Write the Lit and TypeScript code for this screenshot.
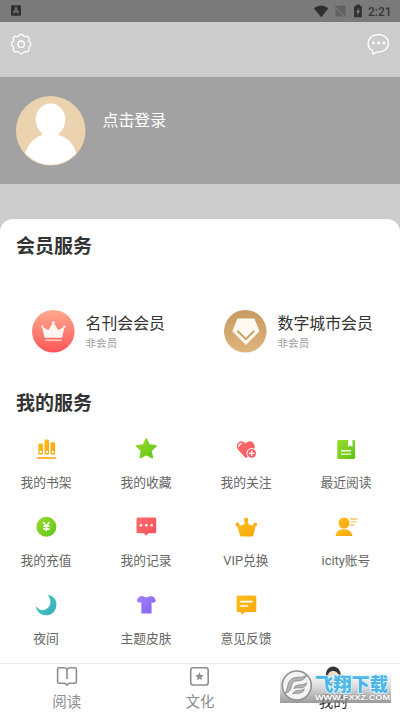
import { LitElement, html, css, svg } from "lit";
import { customElement } from "lit/decorators.js";

const defs = svg`<defs>
  <linearGradient id="o" x1="0" y1="0" x2="1" y2="1"><stop offset="0" stop-color="#fcc023"/><stop offset="1" stop-color="#fba506"/></linearGradient>
  <linearGradient id="g" x1="0" y1="0" x2="1" y2="1"><stop offset="0" stop-color="#98dc2c"/><stop offset="1" stop-color="#5fc417"/></linearGradient>
  <linearGradient id="r" x1="0" y1="0" x2="1" y2="1"><stop offset="0" stop-color="#ff7070"/><stop offset="1" stop-color="#f54f55"/></linearGradient>
  <linearGradient id="t" x1="0" y1="0" x2="1" y2="1"><stop offset="0" stop-color="#4cc8c4"/><stop offset="1" stop-color="#36b0b8"/></linearGradient>
  <linearGradient id="p" x1="0" y1="0" x2="1" y2="1"><stop offset="0" stop-color="#a283fb"/><stop offset="1" stop-color="#8462f2"/></linearGradient>
</defs>`;

const services = [
  { label: "我的书架", icon: svg`<path fill="url(#o)" fill-rule="evenodd" d="M3.2 5.4h3a.8.8 0 0 1 .8.8V16.500H2.300V6.200a.8.8 0 0 1 .9-.8zM4.700 12.700a1.200 1.200 0 1 0 0 2.400 1.200 1.200 0 0 0 0-2.400zM9.300 1.500h2.900a.8.8 0 0 1 .8.8V16.500H8.500V2.300a.8.8 0 0 1 .8-.8zM10.800 12.700a1.200 1.200 0 1 0 0 2.400 1.200 1.200 0 0 0 0-2.400zM15.300 4.200h3a.8.8 0 0 1 .8.8V16.500h-4.600V5a.8.8 0 0 1 .8-.8zM16.800 12.700a1.200 1.200 0 1 0 0 2.400 1.200 1.200 0 0 0 0-2.400z"/><rect x=".7" y="19" width="19.300" height="1.900" rx=".9" fill="#fcb53c"/>` },
  { label: "我的收藏", icon: svg`<path fill="url(#g)" stroke="url(#g)" stroke-width="1.600" stroke-linejoin="round" d="M10.300 .8l2.900 6.300 6.700.8-4.900 4.900 1.200 6.800-5.900-3.100-6 3.100 1.100-6.800L.7 7.900l6.800-.8z"/>` },
  { label: "我的关注", icon: svg`<path fill="url(#r)" d="M9.700 5.300C7.300 2.600 4 2.600 2.100 4.700.1 7 .4 9.900 2.300 12l7 7.400q.8.700 1.600 0L17 12.800c2-2.200 2.300-5 .3-7.700-2-2.500-5.400-2.400-7.600.2z"/><path d="M2.900 8.400c0-1.700 1-2.600 2.500-2.700" stroke="#fff" stroke-width="1.200" stroke-linecap="round" fill="none"/><circle cx="15.700" cy="15.300" r="5.300" fill="#fff"/><circle cx="15.700" cy="15.300" r="4.400" fill="#f5656a"/><path d="M15.700 12.600V18M13 15.300h5.400" stroke="#fff" stroke-width="1.200"/>` },
  { label: "最近阅读", icon: svg`<path fill="url(#g)" d="M3 2h9.100v6.900l2.200-1.500 2.200 1.500V2h1.100c1.100 0 1.500.6 1.500 1.500v16c0 1-.5 1.500-1.500 1.500H3c-1.100 0-1.700-.6-1.700-1.600V3.600C1.300 2.600 1.900 2 3 2z"/><path d="M5.100 12.800h10M5.100 16.100h10" stroke="#f4ffe4" stroke-width="1.400"/>` },
  { label: "我的充值", icon: svg`<circle cx="10.400" cy="10.700" r="10" fill="url(#g)"/><path d="M7.300 6l3.100 4.100L13.500 6M10.400 10v5.300M7.100 10.300h6.600M7.100 13h6.600" stroke="#fff" stroke-width="1.500" fill="none"/>` },
  { label: "我的记录", icon: svg`<path fill="url(#r)" d="M2.200 1.500h16.300c1.100 0 1.700.7 1.700 1.700v12.300c0 1.100-.6 1.700-1.700 1.700h-6.300l-2.100 2.500L8 17.200H2.200c-1.100 0-1.700-.6-1.700-1.700V3.200c0-1 .6-1.700 1.700-1.700z"/><g fill="#fff"><circle cx="4.900" cy="9.300" r="1.300"/><circle cx="10.300" cy="9.300" r="1.300"/><circle cx="15.700" cy="9.300" r="1.300"/></g>` },
  { label: "VIP兑换", icon: svg`<path fill="url(#o)" d="M1 8.800q4.500 1.700 7.400-.7l.6-3.500h2.600l.7 3.500q3.400 2.400 7.400.7l-2.200 10.200c-.2 1-.6 1.400-1.500 1.400H5.300c-1 0-1.400-.5-1.500-1.400z"/><g fill="#fbb018"><circle cx="10.200" cy="4" r="2.200"/><circle cx="1.500" cy="8.500" r="2"/><circle cx="19.200" cy="8.500" r="2"/></g>` },
  { label: "icity账号", icon: svg`<circle cx="8" cy="7" r="5.500" fill="url(#o)"/><path fill="url(#o)" d="M-.4 20.100c.3-4.300 3.100-6.800 8.200-6.800s8 2.500 8.600 6.800z"/><path d="M14.200 3h7M14.800 5.900h5.400M14.200 9h4.300" stroke="#fcc35c" stroke-width="1.400"/>` },
  { label: "夜间", icon: svg`<path fill="url(#t)" d="M11.500.8c5.900.7 9.300 5 8.900 10.600-.5 5.900-4.900 9.900-10.500 9.900-5.400 0-9.600-3.900-10.200-9.500 2.200 3.800 5.800 5.200 9.600 3.800 5.700-2.100 7.100-9.500 2.200-14.800z"/>` },
  { label: "主题皮肤", icon: svg`<path fill="url(#p)" d="M6.800 2q3.500 2.400 7.200 0l3 .4c1.200.7 2.200 2.200 2.900 4.500-.9 1.200-2 1.800-3.400 1.900l-.9-.6v10.200c0 .8-.4 1.200-1.200 1.200H6.500c-.8 0-1.200-.4-1.200-1.200V8.200l-.9.600C3 8.700 1.700 8 .8 6.800 1.500 4.500 2.500 3 3.700 2.400z"/>` },
  { label: "意见反馈", icon: svg`<path fill="url(#o)" d="M2.400 1.600h16c1.200 0 1.900.7 1.900 1.900v12.700c0 1.200-.7 1.900-1.900 1.900h-9L6.200 20.200c-.7.500-1.100.3-1.100-.5v-1.600H2.400c-1.200 0-1.900-.7-1.900-1.900V3.500c0-1.200.7-1.900 1.900-1.900z"/><path d="M5 7.700h11M5 12h6.500" stroke="#fff" stroke-width="1.700" stroke-linecap="round"/>` },
];

@customElement("app-root")
export class AppRoot extends LitElement {
  static styles = css`
    :host { display: flex; flex-direction: column; width: 400px; height: 712px; overflow: hidden; position: relative;
      background: #ccc; font-family: Roboto, "Noto Sans CJK SC", sans-serif; color: #333; }
    * { box-sizing: border-box; }
    svg { display: block; flex: none; overflow: visible; }
    .status { flex: none; height: 21.500px; background: #7a7a7a; display: flex; align-items: center; padding: 0 8px 0 11px; color: #2f2f2f; }
    .status .sp { flex: 1; }
    .time { font-size: 13px; font-weight: 500; }
    .bar { flex: none; height: 55.500px; display: flex; justify-content: space-between; padding: 11px 10px 0 10px; }
    .user { flex: none; height: 107px; background: #a2a2a2; display: flex; padding: 19px 16px 0; }
    .login { margin: 13px 0 0 16.500px; font-size: 15.900px; line-height: 24px; color: #fff; }
    .sheet { margin-top: 35px; flex: 1 1 0; min-height: 0; background: #fff; border-radius: 13px 13px 0 0; }
    h2 { margin: 0; padding-left: 16px; font-size: 19px; line-height: 28px; font-weight: 700; }
    .sheet h2:first-child { padding-top: 14px; }
    .members { display: flex; margin-top: 49px; padding-left: 32px; height: 43px; }
    .member { flex: none; width: 192px; display: flex; }
    .mt { margin-left: 10.500px; }
    .name { font-size: 15.900px; line-height: 24px; margin-top: 2px; white-space: nowrap; }
    .sub { font-size: 10.600px; line-height: 16px; color: #999; }
    .second { margin-top: 37px; }
    .grid { display: grid; grid-template-columns: repeat(4, 100px); grid-auto-rows: 78px; margin: 20px 0 0 -4px; }
    .cell { display: flex; flex-direction: column; align-items: center; color: #666; font-size: 12.800px; line-height: 20px; gap: 13px; }
    .tabs { height: 49px; background: #fff; border-top: 1px solid #ebebeb; display: flex; flex: none; }
    .tab { flex: 1; display: flex; flex-direction: column; align-items: center; font-size: 14.500px; line-height: 20px; color: #8d8d8d; padding-top: 2px; gap: 6px; }
    .tab.on { color: #333; }
    .mark { position: absolute; left: 280px; top: 669px; width: 111px; height: 34px; background: linear-gradient(rgba(150,150,150,0) 5%, rgba(145,145,145,.3) 50%, rgba(130,130,130,.8)); }
  `;

  render() {
    return html`
      <div class="status">
        <svg width="10" height="11" viewBox="0 0 10 11"><rect y=".3" width="10" height="10.400" rx="1" fill="#2f2f2f"/><path d="M2.500 8.500L5 2.500l2.500 6M3.500 6.700h3" stroke="#7a7a7a" stroke-width="1.200" fill="none"/></svg>
        <span class="sp"></span>
        <svg width="79" height="14" viewBox="0 0 79 14">
          <path d="M.8 4.200Q8 -1.200 15.500 4.200L8.200 13.200z" fill="#2f2f2f"/>
          <path d="M25 1.500h7.500v11H22.500V4z" fill="#616161"/><path d="M21.500 2l11.500 11" stroke="#7a7a7a" stroke-width="1.800"/><path d="M22 1.300l11 11.300" stroke="#555" stroke-width="1"/>
          <path d="M43.200.5h3.600v1.400h2v11.300h-7.700V1.900h2.100z" fill="#2f2f2f"/><path d="M46 3.600l-2.800 4.300h1.500L44 11.700l3-4.600h-1.600z" fill="#858585"/>
          <text class="time" x="55" y="11.700" textLength="23.500" lengthAdjust="spacingAndGlyphs" fill="#363636">2:21</text>
        </svg>
      </div>
      <div class="bar">
        <svg width="22" height="22" viewBox="0 0 22 22" fill="none" stroke="#fff" stroke-width="1.300" stroke-linejoin="round"><path d="M8.700 2.900C9.500 1 12.900 1 13.700 2.900c.5.900 1.400.8 2.400.4 1.800-.3 3.300 1.200 2.900 3-.4 1-.5 1.900.4 2.300 1.900.9 1.900 4.100 0 5-.9.500-.8 1.400-.4 2.400.3 1.700-1.200 3.200-2.900 2.900-1-.4-1.900-.5-2.400.4-.8 1.900-4.200 1.900-5 0-.5-.9-1.400-.8-2.400-.4-1.800.3-3.200-1.200-2.900-2.900.4-1 .5-1.900-.4-2.400-1.900-.9-1.900-4.100 0-5 .9-.4.800-1.300.4-2.300-.4-1.800 1.100-3.300 2.900-3 1 .4 1.900.5 2.400-.4z"/><circle cx="11.200" cy="11.200" r="3.200"/></svg>
        <svg width="24" height="24" viewBox="0 0 24 24"><path d="M6.500 17.800C3.600 16 2.200 13.400 2.200 10.200c0-5 4.500-8.700 10.100-8.700 5.700 0 10.200 3.800 10.200 8.700 0 5.100-4.500 8.900-10.200 8.900h-1.500L6.700 21z" stroke="#fff" stroke-width="1.400" fill="none" stroke-linejoin="round"/><g fill="#fff"><circle cx="7.400" cy="10" r="1.400"/><circle cx="12.700" cy="10" r="1.400"/><circle cx="18" cy="10" r="1.400"/></g></svg>
      </div>
      <div class="user">
        <svg width="70" height="70" viewBox="0 0 70 70"><clipPath id="c"><circle cx="34.700" cy="34.800" r="34"/></clipPath><circle cx="34.700" cy="34.800" r="34.800" fill="#ecd3b0"/><g clip-path="url(#c)" fill="#fff"><ellipse cx="34.500" cy="23.800" rx="14.800" ry="16.300"/><path d="M26 34h17v5q13 3.500 17.500 18L52 70H18L9 57Q14 42.500 26 39z"/></g></svg>
        <div class="login">点击登录</div>
      </div>
      <div class="sheet">
        <h2>会员服务</h2>
        <div class="members">
          <div class="member">
            <svg width="43" height="43" viewBox="0 0 43 43"><defs><linearGradient id="m1" x1="0" y1="0" x2="0" y2="1"><stop offset="0" stop-color="#ffaa8f"/><stop offset="1" stop-color="#ff5558"/></linearGradient></defs><circle cx="21.300" cy="21.300" r="21.300" fill="url(#m1)"/><path d="M10 16.800l6.400 3.300 4.900-7.800 4.900 7.800 6.400-3.300-2.500 10.900H12.500z" fill="#fff5f1"/><g fill="#fff5f1"><circle cx="10.300" cy="16.600" r="1.200"/><circle cx="21.300" cy="12.600" r="1.400"/><circle cx="32.300" cy="16.600" r="1.200"/></g><path d="M13 30.200h16.600" stroke="#ffd7cc" stroke-width="1.300"/></svg>
            <div class="mt"><div class="name">名刊会会员</div><div class="sub">非会员</div></div>
          </div>
          <div class="member">
            <svg width="43" height="43" viewBox="0 0 43 43"><defs><linearGradient id="m2" x1="0" y1="0" x2="0" y2="1"><stop offset="0" stop-color="#c79a61"/><stop offset="1" stop-color="#dcb47c"/></linearGradient></defs><circle cx="21.300" cy="21.300" r="21.300" fill="url(#m2)"/><path d="M13.800 9h16.300l4.800 12.300L22 34.400 8.800 21.300z" fill="#fff9f2" stroke="#fff9f2" stroke-width="1" stroke-linejoin="round"/><path d="M13.200 20.800l8.700 8.300 8.400-8.300" fill="none" stroke="#c89f69" stroke-width="1.900"/></svg>
            <div class="mt"><div class="name">数字城市会员</div><div class="sub">非会员</div></div>
          </div>
        </div>
        <h2 class="second">我的服务</h2>
        <div class="grid">
          ${services.map((s) => html`<div class="cell"><svg width="21" height="22" viewBox="0 0 21 22">${defs}${s.icon}</svg><span>${s.label}</span></div>`)}
        </div>
      </div>
      <div class="tabs">
        <div class="tab"><svg width="22" height="21" viewBox="0 0 22 21" fill="none" stroke="#8d8d8d" stroke-width="1.600" stroke-linejoin="round"><path d="M11 3.500C10.300 2.200 9.300 1.700 8 1.700H3.200c-1 0-1.600.6-1.600 1.600v12.400c0 1 .6 1.500 1.600 1.500h5.300l2.500 1.800 2.500-1.800h5.300c1 0 1.600-.5 1.600-1.500V3.300c0-1-.6-1.600-1.600-1.600H14c-1.300 0-2.300.5-3 1.800zV13"/></svg><span>阅读</span></div>
        <div class="tab"><svg width="21" height="21" viewBox="0 0 21 21"><rect x="1.700" y="1.700" width="17.500" height="17.300" rx="2.600" fill="none" stroke="#8d8d8d" stroke-width="1.600"/><path d="M10.400 5.900l1.200 3 3.200.2-2.500 2.100.8 3.100-2.700-1.700-2.700 1.700.8-3.100L6 9.100l3.200-.2z" fill="#8d8d8d"/></svg><span>文化</span></div>
        <div class="tab on"><svg width="21" height="21" viewBox="0 0 21 21"><path d="M3 10.500C1.500-3 18.500-3 17.800 10.500z" fill="#333"/><path d="M5 11C4 3 16 3 15.700 11z" fill="#f3e3c8"/><path d="M4 20q6-8 13 0z" fill="#555"/></svg><span>我的</span></div>
      </div>
      <svg class="mark" viewBox="0 0 111 34">
        <circle cx="16.800" cy="16.500" r="14.500" fill="#f3f3f3" stroke="#909090" stroke-width="1.600"/>
        <path d="M5.500 24C8 20 7 12 12.500 9.500S21 10 26.500 6C25 11 20 12 16 12s-4 4-5 7-2 4-5.500 5zM14 19.500c1-4 5-3.500 7.500-3.700s3.500-1 5-2c-.4 4-3 5-6 5s-4-.3-6.500.7zM12.500 25c2-3 4-3.600 6.500-3.600s4-.6 5.300-1.600C23.500 23.500 21 24.200 18 24.200s-3.300 0-5.500.8z" fill="#b5b5b5" stroke="#777" stroke-width=".7"/>
        <text x="35" y="21.500" textLength="73" lengthAdjust="spacingAndGlyphs" font-family="Noto Sans CJK SC, sans-serif" font-weight="900" font-size="18" fill="#4db6e6" stroke="#e4f6ff" stroke-width="1.600" paint-order="stroke">飞翔下载</text>
        <text x="35" y="31.300" textLength="75" lengthAdjust="spacingAndGlyphs" font-family="Liberation Sans, sans-serif" font-weight="700" font-size="7.500" fill="#fff" stroke="#8a8a8a" stroke-width=".7" paint-order="stroke">WWW.FXXZ.COM</text>
      </svg>
    `;
  }
}
